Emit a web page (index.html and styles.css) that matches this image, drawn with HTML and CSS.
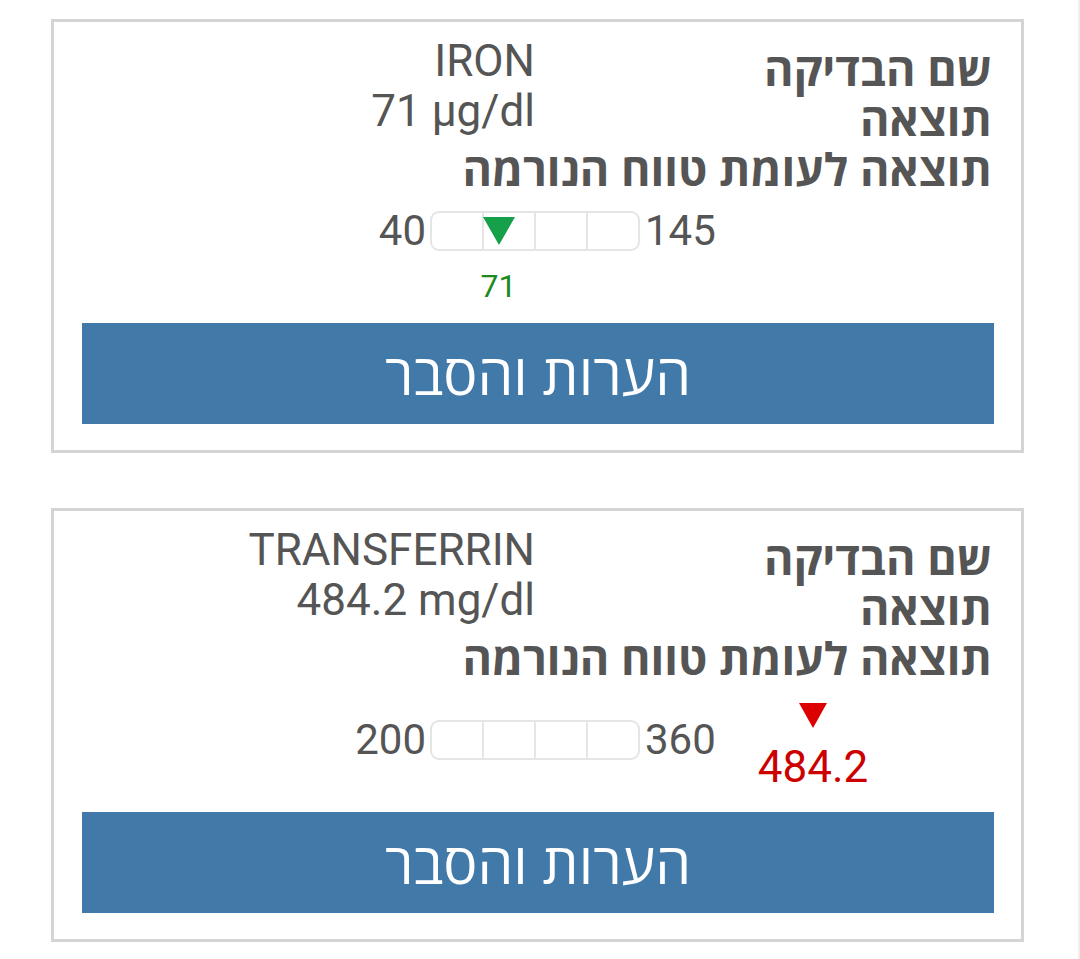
FILE: index.html
```html
<!DOCTYPE html>
<html lang="he" dir="rtl">
<head>
<meta charset="utf-8">
<title>תוצאות בדיקות</title>
<link rel="stylesheet" href="styles.css">
</head>
<body>
<div class="page">
  <section class="card">
    <div class="info">
      <div class="labels">
        <div class="label">שם הבדיקה</div>
        <div class="label">תוצאה</div>
      </div>
      <div class="values">
        <div class="value" dir="ltr">IRON</div>
        <div class="value" dir="ltr">71 μg/dl</div>
      </div>
    </div>
    <div class="label">תוצאה לעומת טווח הנורמה</div>
    <div class="range">
      <div class="range-low">40</div>
      <div class="bar-col">
        <div class="bar"><span></span><span></span><span></span><span></span></div>
        <div class="marker marker--in" style="left: 25%;">
          <div class="tri tri--green"></div>
          <div class="marker-val marker-val--green">71</div>
        </div>
      </div>
      <div class="range-high">145</div>
    </div>
    <button class="btn" type="button">הערות והסבר</button>
  </section>

  <section class="card">
    <div class="info">
      <div class="labels">
        <div class="label">שם הבדיקה</div>
        <div class="label">תוצאה</div>
      </div>
      <div class="values">
        <div class="value" dir="ltr">TRANSFERRIN</div>
        <div class="value" dir="ltr">484.2 mg/dl</div>
      </div>
    </div>
    <div class="label">תוצאה לעומת טווח הנורמה</div>
    <div class="range range--out">
      <div class="range-low">200</div>
      <div class="bar-col">
        <div class="bar"><span></span><span></span><span></span><span></span></div>
      </div>
      <div class="range-high">360
        <div class="out-marker">
          <div class="tri tri--red"></div>
          <div class="out-val">484.2</div>
        </div>
      </div>
    </div>
    <button class="btn" type="button">הערות והסבר</button>
  </section>
</div>
</body>
</html>
```

FILE: styles.css
```css
html, body {
  margin: 0;
  padding: 0;
  background: #ffffff;
}

body {
  font-family: "Open Sans", "DejaVu Sans", sans-serif;
  color: #555555;
}

.page {
  min-height: 100vh;
  box-sizing: border-box;
  padding: 19px 54px 0 51px;
  border-right: 2px solid #eeeeee;
  display: flex;
  flex-direction: column;
  gap: 55px;
}

.card {
  width: 973px;
  box-sizing: border-box;
  border: 3px solid #d4d4d4;
  padding: 22px 27px 26px 28px;
}

.info {
  display: grid;
  grid-template-columns: 1fr 1fr;
}

.label {
  font-family: "Open Sans", "DejaVu Sans", sans-serif;
  font-weight: 700;
  font-size: 45px;
  line-height: 50px;
  color: #555555;
  padding-right: 2px;
  white-space: nowrap;
}

.values {
  margin-top: -8px;
}

.value {
  font-family: Roboto, "Liberation Sans", sans-serif;
  font-size: 44px;
  line-height: 50px;
  color: #555555;
  text-align: right;
  padding-right: 3px;
}

.range {
  direction: ltr;
  display: grid;
  grid-template-columns: 1fr 210px 1fr;
  align-items: start;
  height: 95px;
  margin-top: 17px;
  padding-right: 6px;
  font-family: Roboto, "Liberation Sans", sans-serif;
  color: #555555;
}

.range--out {
  padding-top: 20px;
  box-sizing: border-box;
}

.range-low,
.range-high {
  font-size: 42px;
  line-height: 40px;
  height: 40px;
}

.range-low {
  text-align: right;
  padding-right: 4px;
}

.range-high {
  display: flex;
  align-items: flex-start;
  padding-left: 5px;
}

.bar-col {
  position: relative;
}

.bar {
  height: 40px;
  box-sizing: border-box;
  border: 2px solid #e5e5e5;
  border-radius: 9px;
  display: flex;
  overflow: hidden;
}

.bar span {
  flex: 1;
}

.bar span + span {
  border-left: 2px solid #e5e5e5;
}

.marker {
  position: absolute;
  top: 6px;
  width: 32px;
  display: flex;
  flex-direction: column;
  align-items: center;
}

.tri {
  width: 0;
  height: 0;
}

.tri--green {
  border-left: 16px solid transparent;
  border-right: 16px solid transparent;
  border-top: 28px solid #16a04a;
}

.tri--red {
  border-left: 14px solid transparent;
  border-right: 14px solid transparent;
  border-top: 25px solid #dd0000;
}

.marker-val {
  margin-top: 25px;
  font-size: 32px;
  line-height: 32px;
  white-space: nowrap;
}

.marker-val--green {
  color: #1d8a20;
}

.out-marker {
  margin-top: -17px;
  margin-left: 42px;
  display: flex;
  flex-direction: column;
  align-items: center;
}

.out-val {
  margin-top: 17px;
  font-size: 44px;
  line-height: 44px;
  color: #cc0000;
}

.btn {
  display: block;
  width: 100%;
  height: 101px;
  margin: 17px 0 0;
  border: none;
  background: #4179a9;
  color: #ffffff;
  font-family: "Open Sans", "DejaVu Sans", sans-serif;
  font-size: 57px;
  font-weight: 400;
  line-height: 101px;
  padding: 0;
  cursor: pointer;
}
```
